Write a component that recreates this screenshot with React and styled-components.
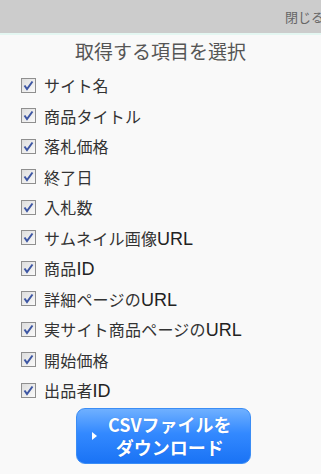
import React from "react";
import styled, { createGlobalStyle } from "styled-components";

const GlobalStyle = createGlobalStyle`
  html, body {
    margin: 0;
    padding: 0;
    background: #f9f9f9;
    font-family: "Noto Sans CJK JP", "Liberation Sans", sans-serif;
  }
`;

const Page = styled.div`
  width: 321px;
  height: 474px;
  overflow: hidden;
  background: #f9f9f9;
`;

const TopBar = styled.div`
  height: 33px;
  background: #cccccc;
  border-bottom: 2px solid #e4f7f2;
  display: flex;
  justify-content: flex-end;
  align-items: center;
  overflow: hidden;
`;

const CloseLink = styled.span`
  font-size: 13px;
  color: #666;
  margin-right: -3px;
  white-space: nowrap;
`;

const Title = styled.h2`
  margin: 0;
  padding-top: 1px;
  height: 30px;
  line-height: 30px;
  text-align: center;
  font-size: 19px;
  font-weight: normal;
  color: #555;
`;

const List = styled.div`
  display: flex;
  flex-direction: column;
  padding-left: 21px;
  padding-top: 4px;
`;

const Row = styled.label`
  display: flex;
  align-items: center;
  gap: 8px;
  height: 30.5px;
  font-size: 16px;
  letter-spacing: 0.2px;
  color: #333;
`;

const Latin = styled.span`
  font-family: "Liberation Sans", sans-serif;
  font-size: 18px;
  letter-spacing: 0;
  color: #222;
`;

const ButtonWrap = styled.div`
  display: flex;
  justify-content: center;
  padding-top: 2px;
  padding-left: 6px;
`;

const CsvButton = styled.button`
  width: 175px;
  height: 56px;
  border: 1px solid #3b8df5;
  border-radius: 9px;
  background: linear-gradient(#6fb0ff 0%, #3389ff 45%, #1a73f5 100%);
  color: #fff;
  font-family: "Noto Sans CJK JP", "Liberation Sans", sans-serif;
  font-weight: bold;
  font-size: 18px;
  line-height: 23px;
  display: flex;
  align-items: center;
  padding: 0 0 0 15px;
  gap: 11px;
  text-shadow: 0 0 1px rgba(0, 60, 160, 0.4);
`;

const Arrow = styled.span`
  flex: none;
  width: 0;
  height: 0;
  border-left: 5px solid #fff;
  border-top: 4px solid transparent;
  border-bottom: 4px solid transparent;
`;

const ButtonText = styled.span`
  text-align: center;
  white-space: nowrap;
`;

function Check() {
  return (
    <svg width="15" height="15" viewBox="0 0 15 15">
      <defs>
        <linearGradient id="cbg" x1="0" y1="0" x2="1" y2="1">
          <stop offset="0" stopColor="#dcdcdc" />
          <stop offset="1" stopColor="#fbfbfb" />
        </linearGradient>
      </defs>
      <rect x="0.5" y="0.5" width="14" height="14" fill="url(#cbg)" stroke="#8f8f8f" />
      <path d="M3.5 7.5 L6 11 L11.5 3.5" fill="none" stroke="#3d56a3" strokeWidth="2" />
    </svg>
  );
}

const items = [
  ["サイト名"],
  ["商品タイトル"],
  ["落札価格"],
  ["終了日"],
  ["入札数"],
  ["サムネイル画像", "URL"],
  ["商品", "ID"],
  ["詳細ページの", "URL"],
  ["実サイト商品ページの", "URL"],
  ["開始価格"],
  ["出品者", "ID"],
];

export default function App() {
  return (
    <Page>
      <GlobalStyle />
      <TopBar>
        <CloseLink>閉じる</CloseLink>
      </TopBar>
      <Title>取得する項目を選択</Title>
      <List>
        {items.map(([ja, en]) => (
          <Row key={ja + (en || "")}>
            <Check />
            <span>
              {ja}
              {en && <Latin>{en}</Latin>}
            </span>
          </Row>
        ))}
      </List>
      <ButtonWrap>
        <CsvButton>
          <Arrow />
          <ButtonText>
            CSVファイルを
            <br />
            ダウンロード
          </ButtonText>
        </CsvButton>
      </ButtonWrap>
    </Page>
  );
}
